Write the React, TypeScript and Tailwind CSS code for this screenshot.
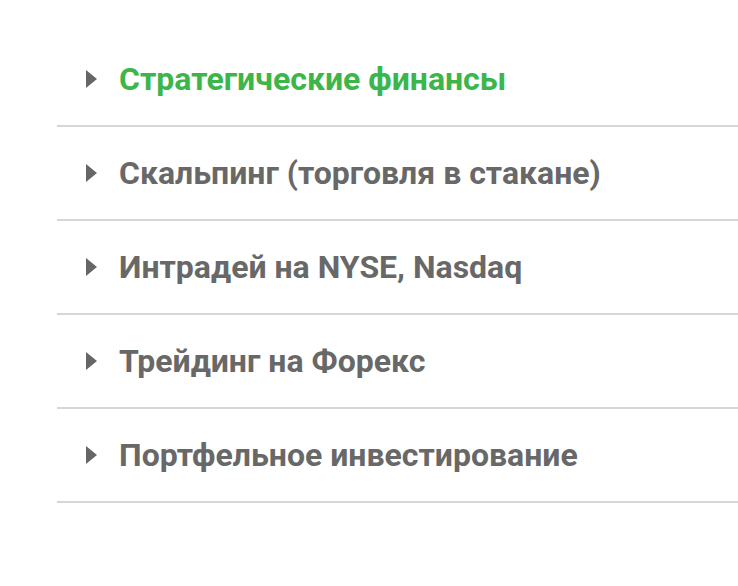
import React from "react";

const items = [
  "Стратегические финансы",
  "Скальпинг (торговля в стакане)",
  "Интрадей на NYSE, Nasdaq",
  "Трейдинг на Форекс",
  "Портфельное инвестирование",
];

export default function App() {
  return (
    <div className="w-[738px] h-[586px] bg-white pt-[33px] pl-[57px]" style={{ fontFamily: "Roboto, 'Noto Sans', sans-serif" }}>
      <ul>
        {items.map((t, i) => (
          <li key={i} className="h-[94px] border-b-2 border-[#d6d6d6] flex items-center">
            <div className="flex items-center pl-[29px]">
              <svg width="11" height="18" viewBox="0 0 11 18" className="mr-[22px]">
                <path d="M0 0 L11 9 L0 18 Z" fill="#666666" />
              </svg>
              <span className={`text-[32px] font-bold leading-none ${i === 0 ? "text-[#3cb54a]" : "text-[#686868]"}`}>{t}</span>
            </div>
          </li>
        ))}
      </ul>
    </div>
  );
}
